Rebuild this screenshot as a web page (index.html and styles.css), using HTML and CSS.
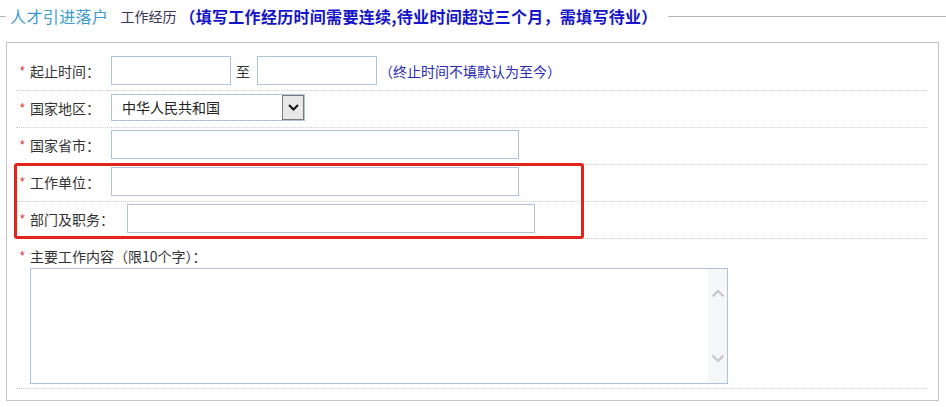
FILE: index.html
```html
<!DOCTYPE html>
<html lang="zh-CN">
<head>
<meta charset="utf-8">
<title>工作经历</title>
<link rel="stylesheet" href="styles.css">
</head>
<body>
<div class="page">
  <div class="legend">
    <span class="legend-line short"></span>
    <span class="legend-title">人才引进落户</span>
    <span class="legend-sub">工作经历</span>
    <span class="legend-note">（填写工作经历时间需要连续,待业时间超过三个月，需填写待业）</span>
    <span class="legend-line long"></span>
  </div>
  <div class="box">
    <div class="row">
      <span class="star">*</span><span class="label">起止时间：</span>
      <input class="field w120" type="text"><span class="to">至</span><input class="field w120" type="text"><span class="hint">（终止时间不填默认为至今）</span>
    </div>
    <div class="row">
      <span class="star">*</span><span class="label">国家地区：</span>
      <div class="select">
        <span class="select-text">中华人民共和国</span>
        <span class="select-btn">
          <svg width="11" height="7" viewBox="0 0 11 7"><path d="M1 1 L5.5 5.5 L10 1" fill="none" stroke="#111" stroke-width="2"/></svg>
        </span>
      </div>
    </div>
    <div class="row">
      <span class="star">*</span><span class="label">国家省市：</span>
      <input class="field w408" type="text">
    </div>
    <div class="highlight-group">
      <div class="row">
        <span class="star">*</span><span class="label">工作单位：</span>
        <input class="field w408" type="text">
      </div>
      <div class="row">
        <span class="star">*</span><span class="label label-wide">部门及职务：</span>
        <input class="field w408" type="text">
      </div>
      <div class="highlight"></div>
    </div>
    <div class="row row-area">
      <div class="area-label"><span class="star">*</span><span class="label">主要工作内容（限10个字）：</span></div>
      <div class="area">
        <div class="area-body"></div>
        <div class="area-scroll">
          <svg width="14" height="9" viewBox="0 0 14 9"><path d="M1.5 7.5 L7 2 L12.5 7.5" fill="none" stroke="#c2c2c2" stroke-width="1.8"/></svg>
          <svg width="14" height="9" viewBox="0 0 14 9"><path d="M1.5 1.5 L7 7 L12.5 1.5" fill="none" stroke="#c2c2c2" stroke-width="1.8"/></svg>
        </div>
      </div>
    </div>
  </div>
</div>
</body>
</html>
```
FILE: styles.css
```css
html, body {
  margin: 0;
  padding: 0;
  background: #ffffff;
}
body {
  font-family: "Noto Sans CJK SC", "Liberation Sans", sans-serif;
  font-size: 14px;
  color: #333333;
}
.page {
  width: 946px;
}
.legend {
  display: flex;
  align-items: center;
  height: 32px;
  margin-bottom: 10px;
  white-space: nowrap;
}
.legend-line {
  height: 1px;
  background: #b4b4b4;
}
.legend-line.short {
  width: 6px;
}
.legend-line.long {
  flex: 1;
  margin-left: 10px;
}
.legend-title {
  margin-left: 4px;
  font-size: 16px;
  color: #3a9ad2;
  line-height: 20px;
  letter-spacing: 0.4px;
}
.legend-sub {
  margin-left: 12px;
  font-size: 14px;
  color: #333355;
  line-height: 20px;
}
.legend-note {
  margin-left: 3px;
  font-size: 16px;
  font-weight: bold;
  color: #1414c8;
  line-height: 20px;
  letter-spacing: 0.3px;
}
.box {
  margin-left: 6px;
  width: 933px;
  box-sizing: border-box;
  border: 1px solid #c4c4c4;
  padding: 11px 10px 11px 9px;
}
.row {
  display: flex;
  align-items: center;
  height: 36px;
  box-sizing: content-box;
  padding: 0 0 0 4px;
  border-bottom: 1px dotted #cfcfcf;
}
.row > .field, .row > .select {
  margin-bottom: 5px;
  margin-top: 2px;
}
.row > .star, .row > .label, .row > .to, .row > .hint {
  margin-bottom: 3px;
}
.star {
  width: 10px;
  flex: none;
  color: #e02020;
  font-size: 12px;
  font-family: "Liberation Sans", sans-serif;
  line-height: 14px;
}
.label {
  font-family: "Noto Sans CJK TC", "Noto Sans CJK SC", sans-serif;
  line-height: 20px;
  margin-right: 11px;
  color: #333333;
}
.label-wide {
  margin-right: 13px;
}
.field {
  height: 29px;
  box-sizing: border-box;
  border: 1px solid #aec2da;
  background: #ffffff;
  padding: 0 4px;
  margin: 0;
  outline: none;
  font: inherit;
}
.w120 {
  width: 120px;
}
.w408 {
  width: 408px;
}
.to {
  margin: 0 7px 0 5px;
  line-height: 20px;
}
.hint {
  margin-left: 2px;
  color: #2a2ab4;
  line-height: 20px;
}
.select {
  width: 194px;
  height: 27px;
  box-sizing: border-box;
  border: 1px solid #aec2da;
  display: flex;
  align-items: stretch;
  background: #ffffff;
}
.select-text {
  flex: 1;
  padding-left: 10px;
  line-height: 25px;
  color: #222222;
}
.select-btn {
  width: 22px;
  box-sizing: border-box;
  border: 1px solid #7a7a7a;
  background: #e8e8e8;
  display: flex;
  align-items: center;
  justify-content: center;
}
.highlight-group {
  position: relative;
}
.highlight {
  position: absolute;
  left: -2px;
  top: -2px;
  width: 570px;
  height: 76px;
  box-sizing: border-box;
  border: 3px solid #e3241b;
  border-radius: 3px;
  pointer-events: none;
}
.row-area {
  display: block;
  height: auto;
  padding-bottom: 4px;
}
.area-label {
  display: flex;
  align-items: center;
  height: 25px;
  padding-top: 4px;
}
.area-label .label {
  margin-right: 0;
}
.area {
  margin-left: 10px;
  width: 698px;
  height: 116px;
  box-sizing: border-box;
  border: 1px solid #aec2da;
  display: flex;
}
.area-body {
  flex: 1;
}
.area-scroll {
  width: 19px;
  background: #f5f6f8;
  display: flex;
  flex-direction: column;
  align-items: center;
  justify-content: space-between;
  padding: 20px 0 20px;
}
```
